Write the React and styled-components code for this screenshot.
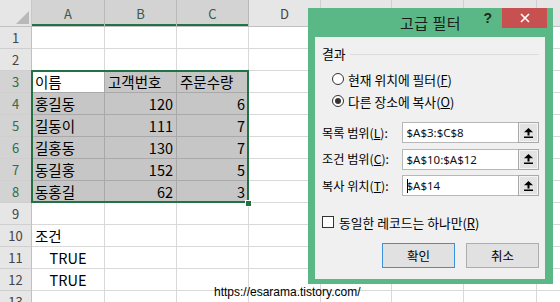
import React from "react";
import styled, { createGlobalStyle } from "styled-components";

const KR = `"Noto Sans CJK KR", "Noto Sans", sans-serif`;

const GlobalStyle = createGlobalStyle`
  html, body { margin: 0; padding: 0; background: #fff; overflow: hidden; }
  * { box-sizing: border-box; }
`;

const COLS = ["A", "B", "C", "D", "E", "F", "G", "H"];
const WIDTHS = [73, 72, 72, 72, 71, 72, 73, 73];
const ROW_COUNT = 13;

// sheet data: row -> col -> value
const DATA = {
  3: { A: "이름", B: "고객번호", C: "주문수량" },
  4: { A: "홍길동", B: 120, C: 6 },
  5: { A: "길동이", B: 111, C: 7 },
  6: { A: "길홍동", B: 130, C: 7 },
  7: { A: "동길홍", B: 152, C: 5 },
  8: { A: "동홍길", B: 62, C: 3 },
  10: { A: "조건" },
  11: { A: true },
  12: { A: true },
};

const inRange = (r, c) => r >= 3 && r <= 8 && ["A", "B", "C"].includes(c);

const Page = styled.div`
  position: relative;
  width: 560px;
  height: 302px;
  overflow: hidden;
`;

const Sheet = styled.div`
  position: relative;
  display: grid;
  grid-template-columns: 32px ${WIDTHS.map((w) => `${w}px`).join(" ")};
  grid-template-rows: 27px repeat(${ROW_COUNT}, 22px);
  font-family: ${KR};
`;

const Corner = styled.div`
  position: relative;
  background: #e6e6e6;
  border-right: 1px solid #c8c8c8;
  border-bottom: 1px solid #c0c0c0;
  &::after {
    content: "";
    position: absolute;
    right: 2px;
    bottom: 2px;
    width: 0;
    height: 0;
    border-left: 13px solid transparent;
    border-bottom: 13px solid #b9b9b9;
  }
`;

const ColHead = styled.div`
  display: flex;
  align-items: center;
  justify-content: center;
  font-size: 13px;
  color: ${(p) => (p.$sel ? "#3c5a48" : "#444")};
  background: ${(p) => (p.$sel ? "#d3d3d3" : "#e6e6e6")};
  border-right: 1px solid ${(p) => (p.$sel ? "#b9b9b9" : "#d0d0d0")};
  border-bottom: 1px solid #c0c0c0;
  box-shadow: ${(p) => (p.$sel ? "inset 0 -2px 0 #217346" : "none")};
`;

const RowHead = styled.div`
  display: flex;
  align-items: center;
  justify-content: center;
  font-size: 13px;
  color: ${(p) => (p.$sel ? "#2f6e4a" : "#444")};
  background: ${(p) => (p.$sel ? "#d3d3d3" : "#e6e6e6")};
  border-right: 1px solid #c0c0c0;
  border-bottom: 1px solid #cfcfcf;
`;

const Cell = styled.div`
  display: flex;
  align-items: center;
  justify-content: ${(p) => p.$align};
  padding: 0 3px 0 3px;
  font-size: 14.5px;
  color: #000;
  white-space: nowrap;
  background: ${(p) => (p.$active ? "#fff" : p.$sel ? "#c6c6c6" : "#fff")};
  border-right: 1px solid ${(p) => (p.$sel ? "#a9a9a9" : "#d9d9d9")};
  border-bottom: 1px solid ${(p) => (p.$sel ? "#a9a9a9" : "#d9d9d9")};
`;

const SelectionBox = styled.div`
  position: absolute;
  left: 31px;
  top: 70px;
  width: 218px;
  height: 133px;
  border: 2px solid #217346;
  pointer-events: none;
`;

const FillHandle = styled.div`
  position: absolute;
  left: 245px;
  top: 200px;
  width: 7px;
  height: 7px;
  background: #217346;
  border: 1px solid #fff;
`;

const Window = styled.div`
  position: absolute;
  left: 308px;
  top: 8px;
  width: 245px;
  height: 276px;
  background: #5ab887;
  display: flex;
  flex-direction: column;
  font-family: ${KR};
`;

const TitleBar = styled.div`
  height: 29px;
  display: grid;
  grid-template-columns: 1fr auto 1fr;
  align-items: start;
`;

const Title = styled.div`
  grid-column: 2;
  font-size: 15px;
  line-height: 29px;
  color: #1b1b1b;
  letter-spacing: 0.5px;
`;

const Controls = styled.div`
  justify-self: end;
  display: flex;
  align-items: flex-start;
  margin-right: 6px;
`;

const Help = styled.span`
  font-family: "Liberation Sans", sans-serif;
  font-weight: bold;
  font-size: 14px;
  line-height: 20px;
  color: #1e2a22;
  margin-right: 10px;
`;

const CloseBtn = styled.div`
  width: 45px;
  height: 20px;
  background: #c75050;
  display: flex;
  align-items: center;
  justify-content: center;
`;

const Body = styled.div`
  flex: 1;
  margin: 0 8px 5px 7px;
  background: #f0f0f0;
  padding: 9px 6px 0 7px;
  display: flex;
  flex-direction: column;
  font-size: 12.8px;
  color: #000;
`;

const GroupTitle = styled.div`
  display: flex;
  align-items: center;
  gap: 4px;
  height: 16px;
  line-height: 16px;
  &::after {
    content: "";
    flex: 1;
    height: 1px;
    background: #dcdcdc;
  }
`;

const RadioList = styled.div`
  margin-top: 6px;
  display: flex;
  flex-direction: column;
`;

const RadioRow = styled.div`
  display: flex;
  align-items: center;
  height: 22px;
  padding-left: 9.5px;
  gap: 4.5px;
`;

const RadioDot = styled.span`
  position: relative;
  width: 12px;
  height: 12px;
  border-radius: 50%;
  border: 1px solid #333;
  background: #fff;
  &::after {
    content: "";
    display: ${(p) => (p.$on ? "block" : "none")};
    position: absolute;
    left: 2px;
    top: 2px;
    width: 6px;
    height: 6px;
    border-radius: 50%;
    background: #333;
  }
`;

const Key = styled.span`
  text-decoration: underline;
  text-underline-offset: 1px;
`;

const Fields = styled.div`
  margin-top: 10px;
  display: flex;
  flex-direction: column;
  gap: 5.5px;
`;

const FieldRow = styled.div`
  display: grid;
  grid-template-columns: 80px 1fr 21px;
  height: 21px;
  align-items: center;
`;

const Label = styled.span`
  white-space: nowrap;
  font-size: 12.2px;
`;

const Input = styled.div`
  height: 21px;
  display: flex;
  align-items: center;
  padding-left: 3.5px;
  background: #fff;
  border: 1px solid #b7b7b7;
  border-right: none;
  font-family: "Noto Sans", sans-serif;
  font-size: 11.5px;
  color: #111;
`;

const Caret = styled.span`
  display: inline-block;
  width: 1px;
  height: 14px;
  background: #000;
  margin-right: -1px;
`;

const PickBtn = styled.div`
  height: 21px;
  display: flex;
  align-items: center;
  justify-content: center;
  background: #e3e3e3;
  border: 1px solid #a9a9a9;
  box-shadow: inset 0 0 0 1px #f4f4f4;
`;

const CheckRow = styled.div`
  margin-top: 19px;
  height: 14px;
  display: flex;
  align-items: center;
  gap: 5px;
`;

const CheckBox = styled.span`
  width: 12px;
  height: 12px;
  border: 1px solid #333;
  background: #fff;
`;

const ButtonRow = styled.div`
  margin-top: 14px;
  display: flex;
  justify-content: flex-end;
  gap: 11px;
`;

const Button = styled.div`
  width: 73px;
  height: 25px;
  display: flex;
  align-items: center;
  justify-content: center;
  font-size: 12.5px;
  background: #e1e1e1;
  border: 1px solid ${(p) => (p.$default ? "#3c8fd9" : "#adadad")};
`;

const Url = styled.div`
  position: absolute;
  left: 214px;
  top: 284px;
  font-family: "Liberation Sans", Arial, sans-serif;
  font-size: 12px;
  line-height: 16px;
  color: #000;
`;

const UpArrow = () => (
  <svg width="9" height="10" viewBox="0 0 9 10">
    <polygon points="0,4.2 4.5,0 9,4.2" fill="#000" />
    <rect x="3.5" y="3.5" width="2" height="4" fill="#000" />
    <rect x="0" y="8.5" width="9" height="1.5" fill="#000" />
  </svg>
);

const CloseIcon = () => (
  <svg width="10" height="10" viewBox="0 0 10 10">
    <path d="M1 1 L9 9 M9 1 L1 9" stroke="#fff" strokeWidth="1.6" />
  </svg>
);

const renderValue = (v) => (v === true ? "TRUE" : v);
const alignOf = (v) =>
  typeof v === "number" ? "flex-end" : v === true ? "center" : "flex-start";

export default function App() {
  const rows = [];
  for (let r = 1; r <= ROW_COUNT; r++) {
    const rowSel = r >= 3 && r <= 8;
    rows.push(
      <RowHead key={`h${r}`} $sel={rowSel}>
        {r}
      </RowHead>
    );
    COLS.forEach((c) => {
      const v = DATA[r]?.[c];
      rows.push(
        <Cell
          key={`${c}${r}`}
          $sel={inRange(r, c)}
          $active={r === 3 && c === "A"}
          $align={alignOf(v)}
        >
          {v !== undefined ? renderValue(v) : null}
        </Cell>
      );
    });
  }

  return (
    <Page>
      <GlobalStyle />
      <Sheet>
        <Corner />
        {COLS.map((c) => (
          <ColHead key={c} $sel={["A", "B", "C"].includes(c)}>
            {c}
          </ColHead>
        ))}
        {rows}
        <SelectionBox />
        <FillHandle />
      </Sheet>

      <Window>
        <TitleBar>
          <Title>고급 필터</Title>
          <Controls>
            <Help>?</Help>
            <CloseBtn>
              <CloseIcon />
            </CloseBtn>
          </Controls>
        </TitleBar>
        <Body>
          <GroupTitle>결과</GroupTitle>
          <RadioList>
            <RadioRow>
              <RadioDot />
              <span>
                현재 위치에 필터(<Key>F</Key>)
              </span>
            </RadioRow>
            <RadioRow>
              <RadioDot $on />
              <span>
                다른 장소에 복사(<Key>O</Key>)
              </span>
            </RadioRow>
          </RadioList>
          <Fields>
            <FieldRow>
              <Label>
                목록 범위(<Key>L</Key>):
              </Label>
              <Input>$A$3:$C$8</Input>
              <PickBtn>
                <UpArrow />
              </PickBtn>
            </FieldRow>
            <FieldRow>
              <Label>
                조건 범위(<Key>C</Key>):
              </Label>
              <Input>$A$10:$A$12</Input>
              <PickBtn>
                <UpArrow />
              </PickBtn>
            </FieldRow>
            <FieldRow>
              <Label>
                복사 위치(<Key>T</Key>):
              </Label>
              <Input>
                <Caret />
                $A$14
              </Input>
              <PickBtn>
                <UpArrow />
              </PickBtn>
            </FieldRow>
          </Fields>
          <CheckRow>
            <CheckBox />
            <span>
              동일한 레코드는 하나만(<Key>R</Key>)
            </span>
          </CheckRow>
          <ButtonRow>
            <Button $default>확인</Button>
            <Button>취소</Button>
          </ButtonRow>
        </Body>
      </Window>

      <Url>https://esarama.tistory.com/</Url>
    </Page>
  );
}
